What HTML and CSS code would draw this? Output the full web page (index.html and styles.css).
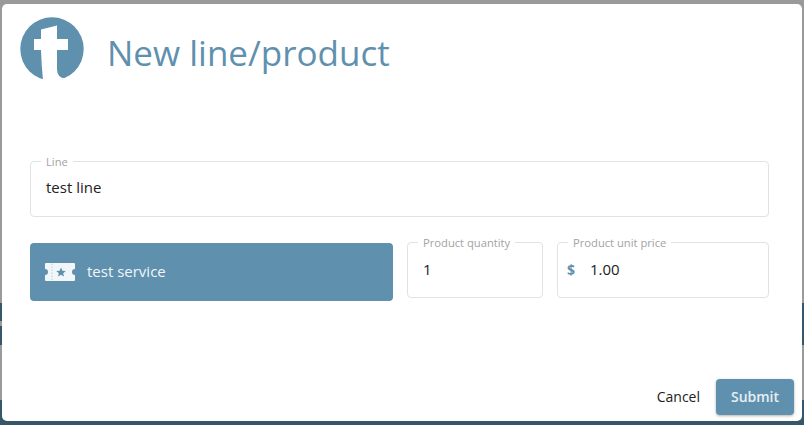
FILE: index.html
```html
<!DOCTYPE html>
<html lang="en">
<head>
<meta charset="utf-8">
<title>New line/product</title>
<link rel="stylesheet" href="styles.css">
</head>
<body>
<div class="backdrop">
  <div class="band band-gray-a"></div>
  <div class="band band-dark-a"></div>
  <div class="band band-gray-b"></div>
  <div class="band band-dark-b"></div>
  <div class="band band-gray-c"></div>
  <div class="band band-dark-c"></div>
</div>
<main class="modal">
  <header class="head">
    <svg class="logo" viewBox="0 0 64 64" aria-hidden="true">
      <circle cx="32" cy="32" r="31.7" fill="#5f91ae"/>
      <path d="M21 12.500 L37 8.500 V22 H48 V33 H37 V52 Q37 61 45.500 61.500 L34 68 H23.500 Q21.500 50 21 33 H14 V22 H21 Z" fill="#fff"/>
    </svg>
    <h1 class="title">New line/product</h1>
  </header>
  <div class="form">
    <fieldset class="field field-line">
      <legend>Line</legend>
      <div class="field-body"><span class="value">test line</span></div>
    </fieldset>
    <div class="row">
      <div class="service">
        <svg class="ticket" viewBox="0 0 32 20" aria-hidden="true">
          <path d="M2 1 H30 Q31 1 31 2 V7 A3 3 0 0 0 31 13 V18 Q31 19 30 19 H2 Q1 19 1 18 V13 A3 3 0 0 0 1 7 V2 Q1 1 2 1 Z" fill="#f2f6f9"/>
          <path d="M8 1.500 V18.500" stroke="#a9d3ec" stroke-width="1" stroke-dasharray="1.500 1.500" fill="none"/>
          <path d="M17 5.500 L18.400 8.700 L21.800 9 L19.200 11.200 L20 14.500 L17 12.800 L14 14.500 L14.800 11.200 L12.200 9 L15.600 8.700 Z" fill="#5f91ae"/>
        </svg>
        <span class="service-name">test service</span>
      </div>
      <fieldset class="field field-qty">
        <legend>Product quantity</legend>
        <div class="field-body"><span class="value">1</span></div>
      </fieldset>
      <fieldset class="field field-price">
        <legend>Product unit price</legend>
        <div class="field-body">
          <span class="currency">$</span>
          <span class="value">1.00</span>
        </div>
      </fieldset>
    </div>
  </div>
  <footer class="actions">
    <button class="btn-cancel" type="button">Cancel</button>
    <button class="btn-submit" type="button">Submit</button>
  </footer>
</main>
</body>
</html>
```
FILE: styles.css
```css
* { box-sizing: border-box; }
html, body { margin: 0; height: 100%; }
body {
  position: relative;
  overflow: hidden;
  font-family: "Open Sans", "Liberation Sans", sans-serif;
  background: #9a9a9a;
}
.backdrop { display: flex; flex-direction: column; height: 425px; }
.band-gray-a { height: 303px; background: #9a9a9a; }
.band-dark-a { height: 18px; background: #36566a; }
.band-gray-b { height: 5px; background: linear-gradient(to right, #9a9a9a 50%, #36566a 50%); }
.band-dark-b { height: 19px; background: #36566a; }
.band-gray-c { height: 55px; background: #9a9a9a; }
.band-dark-c { height: 25px; background: #36566a; }

.modal {
  position: absolute;
  left: 2px;
  top: 4px;
  width: 800px;
  height: 417px;
  background: #fff;
  border-radius: 5px;
  display: flex;
  flex-direction: column;
}
.head {
  display: flex;
  align-items: flex-start;
  padding: 13px 0 0 18px;
  height: 88px;
}
.logo { width: 64px; height: 64px; display: block; flex: none; }
.title {
  margin: 14px 0 0 23px;
  font-size: 35px;
  line-height: 44px;
  font-weight: 400;
  color: #5f91ae;
}
.form {
  padding: 0 33px 0 28px;
  display: flex;
  flex-direction: column;
  gap: 25px;
  margin-top: 64px;
}
.field {
  margin: 0;
  min-width: 0;
  height: 61px;
  border: 1px solid #e2e2e2;
  border-radius: 4px;
  padding: 0 15px;
}
.field legend {
  padding: 0 5px;
  margin-left: -5px;
  font-size: 11.200px;
  line-height: 11px;
  color: #a3a3a3;
}
.field-line { height: 60px; margin-top: 1px; }
.field-line legend { line-height: 9px; }
.field-body { display: flex; align-items: center; height: 42px; }
.value { font-size: 15px; line-height: 20px; color: #222; }
.row { display: flex; align-items: flex-start; gap: 14px; }
.service {
  width: 363px;
  height: 58px;
  margin-top: 1px;
  background: #5f91ae;
  border-radius: 4px;
  display: flex;
  align-items: center;
  padding-left: 14px;
  gap: 11px;
  color: #f1f6f9;
  font-size: 15px;
}
.service-name { margin-bottom: 2px; }
.ticket { width: 32px; height: 20px; flex: none; }
.field-qty { width: 136px; margin-top: -5px; }
.field-price { flex: 1; margin-top: -5px; }
.currency { font-size: 14px; font-weight: 700; color: #5f91ae; width: 23px; margin-left: -6px; }
.actions {
  margin-top: auto;
  display: flex;
  justify-content: flex-end;
  align-items: center;
  gap: 16px;
  padding: 0 8px 6px 0;
}
button { font-family: inherit; font-size: 14px; border: 0; cursor: pointer; padding: 0 0 2px; }
.btn-cancel { background: none; color: #222; }
.btn-submit {
  width: 78px;
  height: 36px;
  border-radius: 4px;
  background: #5f91ae;
  color: #e6eff4;
  font-weight: 600;
  box-shadow: 0 1px 3px rgba(0,0,0,.3);
}
```
